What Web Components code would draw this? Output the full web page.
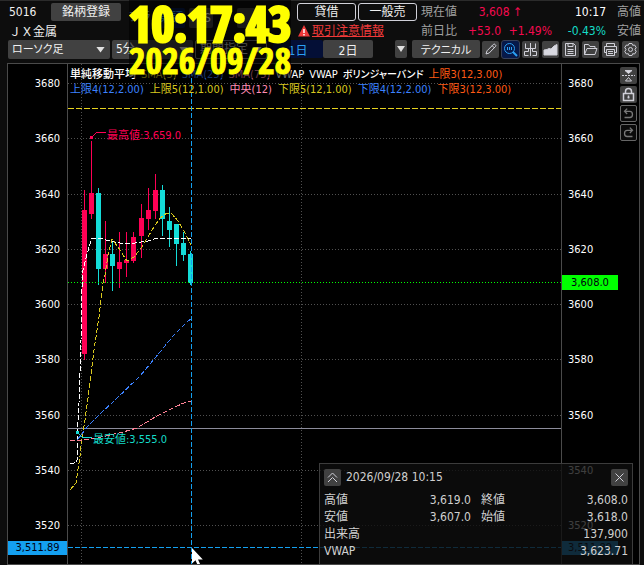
<!DOCTYPE html>
<html lang="ja">
<head>
<meta charset="utf-8">
<title>JX金属 5016</title>
<style>
    html, body {
        margin: 0;
        height: 100%;
        background: #0d0d0d;
        overflow: hidden;
    }
</style>
</head>
<body>
<trade-app></trade-app>
<script>
const BASE = `
    * { box-sizing: border-box; }
    button, select {
        font: inherit;
        color: inherit;
        margin: 0;
        padding: 0;
        border: 0;
        border-radius: 2px;
        background: #414141;
        font-feature-settings: inherit;
        white-space: nowrap;
    }
`;

const ICONS = {
    pencil: '<path d="M4 13l1-3.2L11.5 3.3q.8-.6 1.5.1l.6.6q.6.8 0 1.4L7.2 12z M10.2 4.7l2.1 2.1" />',
    search: '<g stroke="#2ba0f4"><circle cx="7.5" cy="7.5" r="5"/><path d="M11 11l4 4" stroke-width="2"/><path d="M5.500 6v3M7.500 6v3M9.500 6v3"/></g>',
    split: '<path d="M8.500 2v13M3.500 2.500v5h10v-5M2.500 14.500v-4h4v-3M14.500 14.500v-4h-4v-3M2.500 14.500h4M10.500 14.500h4"/>',
    area: '<path fill="#d8d8e0" d="M2 14V9l3-.5 2-1 2 .5 3-3 3-1.500V14z"/>',
    save: '<path d="M3.500 2.500h8l2 2v10h-10zM6 2.500v3h5v-3M5.500 8.500h6M5.500 10.500h6M5.500 12.500h6"/>',
    folder: '<path d="M2.500 13.500v-10h4l1.500 2h5v2M2.500 13.500l2.500-6h10l-2 6z"/>',
    print: '<path d="M4.500 5.500v-3h8v3M4.500 11.500h-2v-6h12v6h-2M4.500 8.500h8v6h-8zM6 10.500h5M6 12.500h5"/>',
    gear: '<path d="M7 2.500h3l.7 1.800 1.900-.3 1.600 2.500-1.200 2 1.200 2-1.600 2.500-1.900-.3-.7 1.800H7l-.7-1.800-1.900.3-1.600-2.500 1.200-2-1.200-2L4.400 4l1.900.3z"/><circle cx="8.500" cy="8.500" r="2"/>',
    flip: '<path fill="#d8d8e0" d="M5 3.500h7l-3.500 3z"/><path d="M5.500 14h6l-3-3.500z"/><path d="M2 8.500h13" stroke-dasharray="2 1"/>',
    lock: '<path d="M3.500 7.500h10v7h-10zM5.500 7.500v-2q0-3 3-3t3 3v2M8.500 9.500v3M7.500 11.500h2" stroke-width="1.500"/>',
    undo: '<path stroke="#777" stroke-width="1.500" d="M4 13h6q3 0 3-3.500T10 6H4.500M7 3L4 6l3 3"/>',
    redo: '<path stroke="#777" stroke-width="1.500" d="M13 13H7q-3 0-3-3.500T7 6h5.500M10 3l3 3-3 3"/>',
    collapse: '<path d="M4 8.500l4.500-4.500 4.500 4.500M4 13l4.500-4.500L13 13"/>',
    close: '<path d="M4.500 4.500l8 8M12.500 4.500l-8 8"/>'
};

class ToolButton extends HTMLElement {
    constructor() {
        super();
        this.attachShadow({mode: 'open'});
    }

    connectedCallback() {
        const icon = this.getAttribute('icon');
        this.shadowRoot.innerHTML = `
            <style>
                ${BASE}
                :host { display: block; flex: none; width: 17px; height: 17px; }
                button { display: block; width: 100%; height: 100%; }
                svg { display: block; width: 100%; height: 100%; }
                :host([active]) button { background: #06194a; outline: 1px solid #38415a; }
                :host([off]) button { background: #0a0a0a; border: 1px solid #666; }
            </style>
            <button type="button" aria-label="${icon}">
                <svg viewBox="0 0 17 17" fill="none" stroke="#d0d0d8">${ICONS[icon]}</svg>
            </button>
        `;
    }
}

class PickList extends HTMLElement {
    constructor() {
        super();
        this.attachShadow({mode: 'open'});
    }

    connectedCallback() {
        const value = this.getAttribute('value');
        this.shadowRoot.innerHTML = `
            <style>
                ${BASE}
                :host { display: block; position: relative; height: 19px; }
                select {
                    appearance: none;
                    display: block;
                    width: 100%;
                    height: 100%;
                    padding: 0 4px;
                }
                i {
                    position: absolute;
                    right: 5px;
                    top: 7px;
                    width: 9px;
                    height: 6px;
                    background: #e0e0e0;
                    clip-path: polygon(0 0, 100% 0, 50% 100%);
                    pointer-events: none;
                }
                :host([outline]) select { background: #0d0d0d; border: 1px solid #777; color: #bbb; }
            </style>
            <select aria-label="${this.getAttribute('label')}"><option>${value}</option></select><i></i>
        `;
    }
}

class QuoteHeader extends HTMLElement {
    constructor() {
        super();
        this.attachShadow({mode: 'open'});
    }

    connectedCallback() {
        this.shadowRoot.innerHTML = `
            <style>
                ${BASE}
                :host {
                    display: flex;
                    height: 39px;
                    padding-top: 2px;
                    border-top: 1px solid #2b2b2b;
                    line-height: 18px;
                    overflow: hidden;
                }
                .row { display: flex; height: 18px; white-space: nowrap; }
                .row + .row { margin-top: 1px; }
                .ident { flex: none; width: 121px; padding-left: 9px; }
                .ident .row { justify-content: space-between; }
                .ident button { width: 70px; }
                .name { font-family: "Noto Sans CJK JP", sans-serif; font-feature-settings: normal; }
                .markets { flex: 1; min-width: 0; padding: 5px 0 0 8px; display: flex; align-items: flex-start; }
                .markets > * { flex: none; }
                .markets span { width: 28px; color: #7fa0c0; }
                .markets button { height: 20px; margin-right: 4px; padding: 0 2px; }
                .markets .on { background: #06194a; color: #2ba0f4; }
                .markets .blank { width: 22px; margin-left: 20px; }
                .loan { flex: none; width: 124px; }
                .loan .row { gap: 2px; }
                .loan button { width: 59px; background: #0d0d0d; border: 1px solid #d0d0d8; border-radius: 3px; line-height: 14px; }
                a { display: flex; align-items: center; gap: 2px; padding-left: 1px; color: #f03a3a; }
                a svg { width: 12px; height: 12px; }
                .quote { flex: none; width: 223px; color: #a0a0a0; }
                .quote .row { display: grid; grid-template-columns: 36px 44px 51px 54px 24px; text-align: right; }
                .quote .row > :last-child { padding-left: 11px; text-align: left; }
                .price { grid-column: 2 / 4; padding-right: 30px; }
                .up { color: #f50a50; }
                .down { color: #14dcc8; }
                .time { color: #fff; }
            </style>
            <div class="ident">
                <div class="row"><span>5016</span><button type="button">銘柄登録</button></div>
                <div class="row"><span class="name">ＪＸ金属</span></div>
            </div>
            <div class="markets">
                <span>プラ</span>
                <button type="button" class="on">東証</button>
                <button type="button">PTS</button>
                <button type="button" class="blank" aria-label="other"></button>
            </div>
            <div class="loan">
                <div class="row"><button type="button">貸借</button><button type="button">一般売</button></div>
                <div class="row">
                    <a href="#notice">
                        <svg viewBox="0 0 12 12"><path d="M6 0l6 11.500H0z" fill="#f03a3a"/><path d="M6 4v4M6 9v1.500" stroke="#fff" stroke-width="1.500"/></svg>
                        取引注意情報
                    </a>
                </div>
            </div>
            <div class="quote">
                <div class="row">
                    <span>現在値</span><span class="price up">3,608 ↑</span><span class="time">10:17</span><span>高値</span>
                </div>
                <div class="row">
                    <span>前日比</span><span class="up">+53.0</span><span class="up">+1.49%</span><span class="down">-0.43%</span><span>安値</span>
                </div>
            </div>
        `;
    }
}

class ChartToolbar extends HTMLElement {
    constructor() {
        super();
        this.attachShadow({mode: 'open'});
    }

    connectedCallback() {
        this.shadowRoot.innerHTML = `
            <style>
                ${BASE}
                :host { display: flex; align-items: center; gap: 2px; height: 20px; padding: 0 5px 0 8px; }
                .kind { width: 102px; font-size: 11px; }
                .span { width: 81px; }
                .term { width: 72px; }
                button { height: 18px; flex: none; }
                .days { display: flex; margin-left: 4px; flex: 1; }
                .days button { width: 50px; }
                .days .on { background: #040f36; color: #2ba0f4; }
                .more { width: 12px; margin-right: 3px; display: grid; place-items: center; }
                .more i { width: 8px; height: 6px; background: #e0e0e0; clip-path: polygon(0 0, 100% 0, 50% 100%); }
                .tech { width: 68px; font-size: 11px; }
                .icons { display: flex; gap: 3px; }
            </style>
            <pick-list class="kind" label="足種" value="ローソク足"></pick-list>
            <pick-list class="span" label="足" value="5分"></pick-list>
            <pick-list class="term" label="期間" value="期間指定" outline></pick-list>
            <div class="days">
                <button type="button" class="on">1日</button><button type="button">2日</button>
            </div>
            <button type="button" class="more" aria-label="more"><i></i></button>
            <button type="button" class="tech">テクニカル</button>
            <div class="icons">
                <tool-button icon="pencil"></tool-button>
                <tool-button icon="search" active></tool-button>
                <tool-button icon="split"></tool-button>
                <tool-button icon="area"></tool-button>
                <tool-button icon="save"></tool-button>
                <tool-button icon="folder"></tool-button>
                <tool-button icon="print"></tool-button>
                <tool-button icon="gear"></tool-button>
            </div>
        `;
    }
}

class PriceAxis extends HTMLElement {
    constructor() {
        super();
        this.attachShadow({mode: 'open'});
    }

    connectedCallback() {
        let labels = '';
        for (let p = 3680; p >= 3520; p -= 20) {
            labels += `<span>${p}</span>`;
        }
        this.shadowRoot.innerHTML = `
            <style>
                ${BASE}
                :host {
                    display: block;
                    position: relative;
                    border: 0 solid #4a4a4a;
                    font-size: 11px;
                    color: #fff;
                }
                :host([side=left]) { border-right-width: 1px; text-align: right; }
                :host([side=right]) { border-left-width: 1px; }
                .labels {
                    display: flex;
                    flex-direction: column;
                    justify-content: space-between;
                    height: 458px;
                    margin-top: 12px;
                    padding: 0 7px 0 6px;
                    line-height: 16px;
                }
            </style>
            <div class="labels">${labels}</div>
            <slot></slot>
        `;
    }
}

// x, high, low, body top, body bottom, rising
const CANDLES = [
    [84, 190, 360, 210, 354, 1], [91, 141, 219, 193, 214, 1],
    [98, 188, 285, 193, 269, 0], [105, 221, 283, 254, 269, 1],
    [112, 242, 291, 254, 266, 0], [119, 232, 288, 262, 269, 1],
    [126, 232, 277, 260, 263, 1], [133, 232, 263, 237, 261, 1],
    [141, 204, 258, 218, 236, 1], [148, 188, 230, 210, 219, 1],
    [155, 174, 219, 190, 211, 1], [162, 185, 236, 190, 219, 0],
    [169, 207, 247, 221, 230, 0], [176, 224, 266, 224, 244, 0],
    [183, 232, 261, 243, 255, 0], [190, 251, 285, 254, 283, 0]
];

const LINES = [
    ['#fff', '70,464 74,463 77,461 78,420 79,403 81,340 82,287 83,270 86,258 89,247 92,238 99,238 110,241 120,243 135,243 148,241 157,238 187,238 191,239'],
    ['#d8c81e', '70,490 76,483 80,456 82,437 85,420 90,383 94,350 99,317 103,283 105,275 108,255 112,239 118,247 127,261 134,257 142,247 152,230 160,218 167,213 172,214 178,221 185,233 191,245'],
    ['#3c82ff', '70,440 77,440 82,434 88,426 100,414 113,402 140,376 160,352 173,336 188,321 191,319'],
    ['#ff8296', '70,440 83,440 97,438 123,432 137,428 157,416 173,408 188,401 191,401']
];

class PricePlot extends HTMLElement {
    constructor() {
        super();
        this.attachShadow({mode: 'open'});
    }

    connectedCallback() {
        this.shadowRoot.innerHTML = `
            <style>
                ${BASE}
                :host { display: block; position: relative; overflow: hidden; }
                svg { position: absolute; inset: 0; width: 100%; height: 100%; }
                .legend { position: relative; padding: 3px 2px; font-size: 11px; line-height: 15px; }
                .legend div { display: flex; gap: 6px; height: 15px; white-space: nowrap; }
                .legend .first { gap: 5px; }
                .w { color: #fff; font-weight: 500; }
                .y { color: #d8c81e; }
                .b { color: #3c82ff; }
                .p { color: #ff8cb4; }
                .o { color: #ff5a14; }
                .kana { font-size: 10px; }
                text { font-size: 11px; }
            </style>
            <svg shape-rendering="crispEdges" fill="none">
                ${this._grid()}
                <line x1="0" x2="100%" y1="44.5" y2="44.5" stroke="#e6d21e" stroke-dasharray="6 2"/>
                <line x1="0" x2="100%" y1="364.5" y2="364.5" stroke="#8c8c9b"/>
                <g transform="translate(-68 -64)">${this._candles()}${this._curves()}${this._marks()}</g>
                <line x1="0" x2="100%" y1="218.5" y2="218.5" stroke="#00ff00" stroke-dasharray="1 2"/>
                <line x1="0" x2="100%" y1="483.5" y2="483.5" stroke="#14a0f0" stroke-dasharray="5 2"/>
                <line x1="123.500" x2="123.500" y1="0" y2="100%" stroke="#14a0f0" stroke-dasharray="5 2"/>
                <path transform="translate(124 484)" fill="#fff" shape-rendering="auto" d="M0 0v15.500l3.500-3.200 3 6.700 2.500-1-3-6.500h4.800z"/>
            </svg>
            <div class="legend">
                <div class="first">
                    <span class="w">単純移動平均</span><span class="y">SMA(5)</span><span class="b">SMA(25)</span><span class="p">SMA(75)</span>
                    <span class="w">VWAP</span><span class="w">VWAP</span><span class="w kana">ボリンジャーバンド</span><span class="o">上限3(12,3.00)</span>
                </div>
                <div>
                    <span class="b">上限4(12,2.00)</span><span class="y">上限5(12,1.00)</span><span class="p">中央(12)</span>
                    <span class="y">下限5(12,1.00)</span><span class="b">下限4(12,2.00)</span><span class="o">下限3(12,3.00)</span>
                </div>
            </div>
        `;
    }

    _grid() {
        let out = '';
        for (let i = 0; i < 9; i++) {
            const y = Math.round(19 + i * 55.25) + 0.5;
            out += `<line x1="0" x2="100%" y1="${y}" y2="${y}"/>`;
        }
        for (const x of [13.5, 233.5]) {
            out += `<line x1="${x}" x2="${x}" y1="0" y2="100%"/>`;
        }
        return `<g stroke="#505050" stroke-dasharray="1 2">${out}</g>`;
    }

    _candles() {
        return CANDLES.map(([x, high, low, top, bottom, up]) => `
            <g fill="${up ? '#ff0055' : '#14dcd8'}">
                <rect x="${x}" y="${high}" width="1" height="${low - high}"/>
                <rect x="${x - 2}" y="${top}" width="5" height="${bottom - top}"/>
            </g>`).join('');
    }

    _curves() {
        return LINES.map(([color, points]) =>
            `<polyline points="${points}" stroke="${color}" stroke-dasharray="5 2"/>`).join('');
    }

    _marks() {
        return `
            <rect x="90" y="136" width="3" height="3" fill="#ff0055"/>
            <path d="M92 137l4.500-4.500H106" stroke="#ff0055"/>
            <text x="107" y="139" fill="#ff0055">最高値:3,659.0</text>
            <rect x="76" y="431" width="3" height="3" fill="#14dcd8"/>
            <path d="M78 433l4.500 4.500H92" stroke="#14dcd8"/>
            <text x="93" y="443" fill="#14dcc8">最安値:3,555.0</text>
        `;
    }
}

class OhlcPanel extends HTMLElement {
    constructor() {
        super();
        this.attachShadow({mode: 'open'});
    }

    connectedCallback() {
        this.shadowRoot.innerHTML = `
            <style>
                ${BASE}
                :host {
                    display: block;
                    width: 314px;
                    padding: 4px;
                    border: 1px solid #3c3c3c;
                    border-bottom: 0;
                    background: rgba(14, 14, 14, .8);
                    color: #d0d0d0;
                    font-size: 12px;
                }
                header { display: flex; align-items: center; gap: 5px; height: 18px; margin-bottom: 6px; }
                time { flex: 1; }
                table { width: 100%; table-layout: fixed; border-collapse: collapse; line-height: 17px; }
                th { padding: 0; font-weight: 400; text-align: left; }
                td { padding: 0; text-align: right; }
                td + th { padding-left: 10px; }
                .label { width: 48px; }
                .value { width: 99px; }
            </style>
            <header>
                <tool-button icon="collapse"></tool-button>
                <time>2026/09/28 10:15</time>
                <tool-button icon="close"></tool-button>
            </header>
            <table>
                <colgroup><col class="label"><col class="value"><col class="label"><col></colgroup>
                <tr><th>高値</th><td>3,619.0</td><th>終値</th><td>3,608.0</td></tr>
                <tr><th>安値</th><td>3,607.0</td><th>始値</th><td>3,618.0</td></tr>
                <tr><th>出来高</th><td colspan="3">137,900</td></tr>
                <tr><th>VWAP</th><td colspan="3">3,623.71</td></tr>
            </table>
        `;
    }
}

class ClockOverlay extends HTMLElement {
    constructor() {
        super();
        this.attachShadow({mode: 'open'});
    }

    connectedCallback() {
        this.shadowRoot.innerHTML = `
            <style>
                :host {
                    display: block;
                    width: 162px;
                    height: 78px;
                    background: rgba(0, 0, 0, .6);
                    color: #ff0;
                    font-family: "Open Sans Condensed", "Roboto Condensed", "Open Sans", sans-serif;
                    font-weight: 700;
                    white-space: nowrap;
                    text-align: center;
                    pointer-events: none;
                }
                div { display: flex; justify-content: center; }
                .time { font-size: 49px; line-height: 47px; -webkit-text-stroke: 3px #ff0; }
                .date { font-size: 36px; line-height: 28px; -webkit-text-stroke: 1px #ff0; }
            </style>
            <div class="time">10:17:43</div>
            <div class="date">2026/09/28</div>
        `;
    }
}

class TradeApp extends HTMLElement {
    constructor() {
        super();
        this.attachShadow({mode: 'open'});
    }

    connectedCallback() {
        this.shadowRoot.innerHTML = `
            <style>
                ${BASE}
                :host {
                    display: flex;
                    flex-direction: column;
                    position: relative;
                    height: 100vh;
                    min-width: 600px;
                    overflow: hidden;
                    color: #f0f0f0;
                    font-family: "DejaVu Sans Condensed", "Noto Sans CJK JP", sans-serif;
                    font-size: 12px;
                    font-feature-settings: "palt";
                }
                main {
                    flex: 1;
                    min-height: 0;
                    display: grid;
                    grid-template-columns: 60px 1fr 78px;
                    position: relative;
                    margin: 4px 4px 0 7px;
                    border: 1px solid #4a4a4a;
                    background: #000;
                }
                .tag {
                    position: absolute;
                    left: 0;
                    width: 56px;
                    height: 15px;
                    line-height: 15px;
                    text-align: center;
                    color: #001;
                }
                .last { top: 211px; background: #00ff00; }
                .cursor { top: 477px; height: 14px; line-height: 14px; background: #14a0f0; }
                .wide { width: 59px; }
                .side {
                    position: absolute;
                    top: 3px;
                    right: 2px;
                    display: flex;
                    flex-direction: column;
                    gap: 2px;
                }
                ohlc-panel { position: absolute; right: 6px; bottom: 0; }
                clock-overlay { position: absolute; left: 129px; top: 0; }
            </style>
            <quote-header></quote-header>
            <chart-toolbar></chart-toolbar>
            <main>
                <price-axis side="left"><span class="tag cursor wide">3,511.89</span></price-axis>
                <price-plot></price-plot>
                <price-axis side="right">
                    <span class="tag last">3,608.0</span>
                    <span class="tag cursor">3,511.89</span>
                    <div class="side">
                        <tool-button icon="flip"></tool-button>
                        <tool-button icon="lock"></tool-button>
                        <tool-button icon="undo" off></tool-button>
                        <tool-button icon="redo" off></tool-button>
                    </div>
                </price-axis>
                <ohlc-panel></ohlc-panel>
            </main>
            <clock-overlay></clock-overlay>
        `;
    }
}

customElements.define('tool-button', ToolButton);
customElements.define('pick-list', PickList);
customElements.define('quote-header', QuoteHeader);
customElements.define('chart-toolbar', ChartToolbar);
customElements.define('price-axis', PriceAxis);
customElements.define('price-plot', PricePlot);
customElements.define('ohlc-panel', OhlcPanel);
customElements.define('clock-overlay', ClockOverlay);
customElements.define('trade-app', TradeApp);
</script>
</body>
</html>
